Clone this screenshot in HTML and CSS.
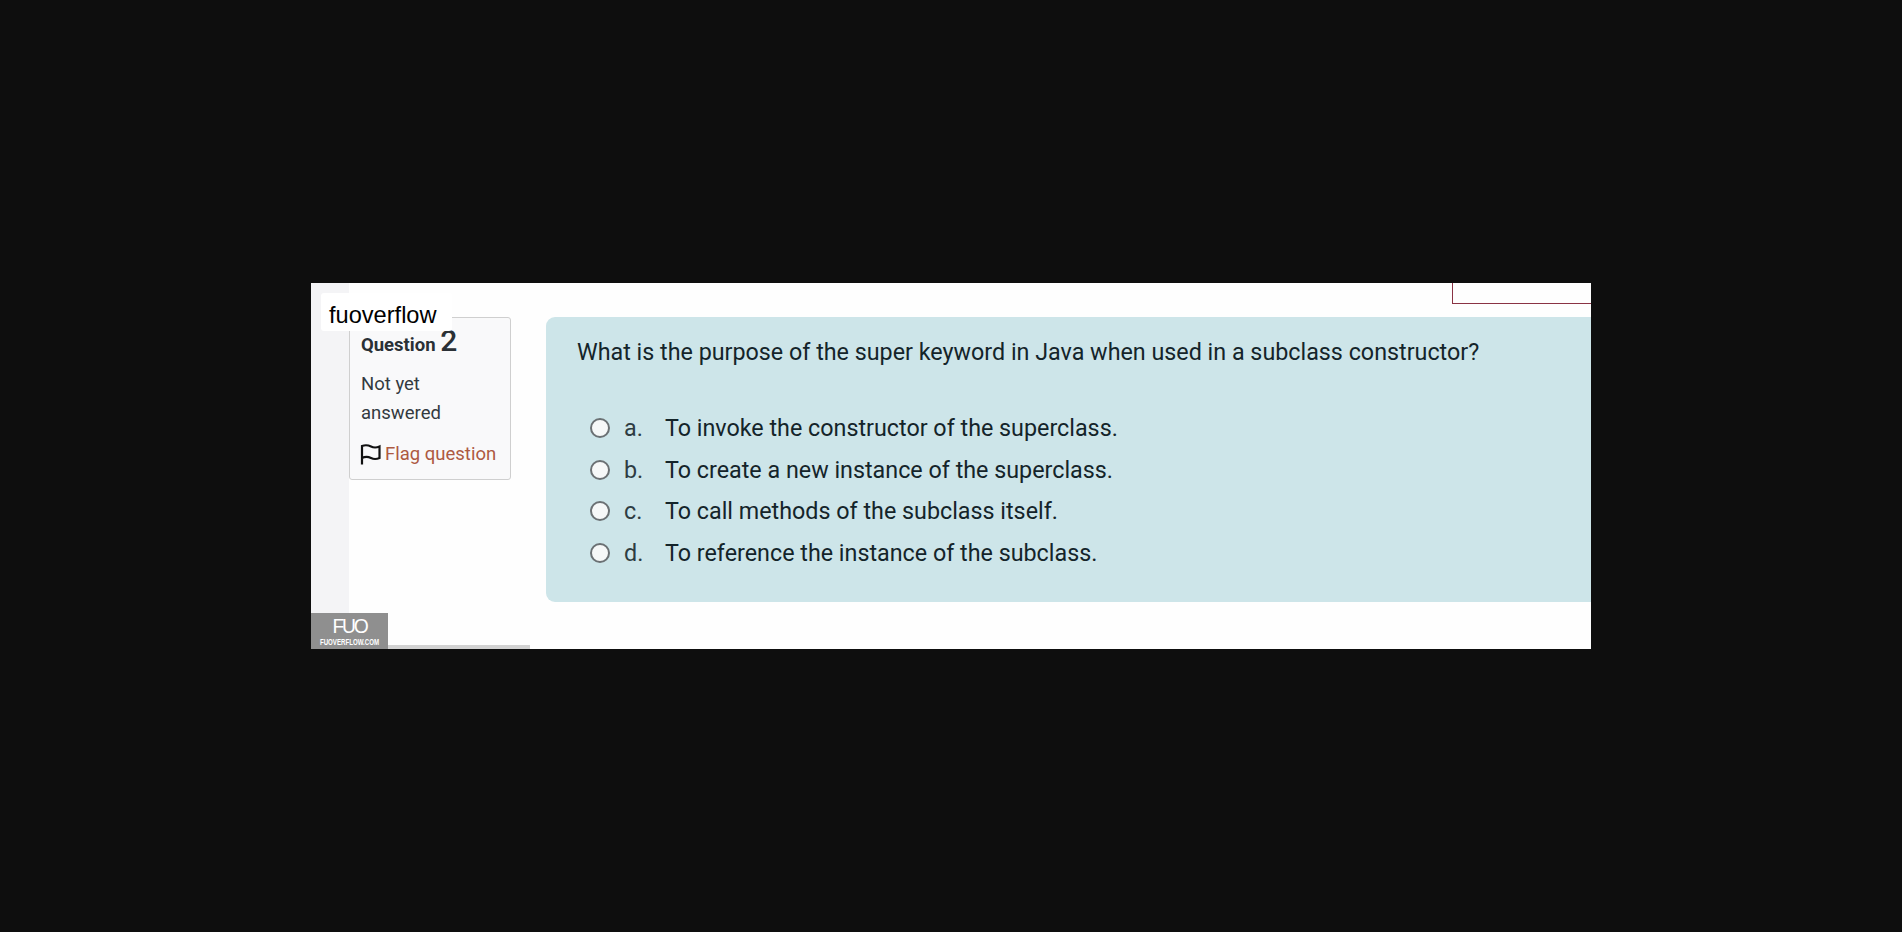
FILE: index.html
```html
<!DOCTYPE html>
<html lang="en">

<head>
    <meta charset="UTF-8">
    <title>Question 2 - fuoverflow</title>
    <link rel="stylesheet" href="styles.css">
</head>

<body>
    <div class="frame">
        <div class="strip"></div>

        <div class="content">
            <div class="top-row">
                <div class="timer-box"></div>
            </div>

            <div class="question-row">
                <div class="info-card">
                    <h3 class="question-no">Question <span class="number">2</span></h3>
                    <p class="state">Not yet answered</p>
                    <a class="flag" href="#">
                        <svg class="flag-icon" width="21" height="22" viewBox="0 0 21 22">
                            <path d="M2 21.500V3C6 1.500 8 2 11 3.500C14 5 16 5 19.500 3.500V15C16 16.500 14 16.500 11 15C8 13.500 6 13 2 15" fill="none" stroke="#111" stroke-width="2.200" />
                        </svg>
                        Flag question
                    </a>
                </div>

                <div class="question-box">
                    <p class="question-text">What is the purpose of the super keyword in Java when used in a subclass constructor?</p>
                    <div class="answers">
                        <label class="answer"><span class="radio"></span><span class="letter">a.</span>To invoke the constructor of the superclass.</label>
                        <label class="answer"><span class="radio"></span><span class="letter">b.</span>To create a new instance of the superclass.</label>
                        <label class="answer"><span class="radio"></span><span class="letter">c.</span>To call methods of the subclass itself.</label>
                        <label class="answer"><span class="radio"></span><span class="letter">d.</span>To reference the instance of the subclass.</label>
                    </div>
                </div>
            </div>
        </div>

        <!-- Marcas de agua encima del contenido -->
        <div class="brand">fuoverflow</div>
        <div class="logo">
            <span class="logo-big">FUO</span>
            <span class="logo-small">FUOVERFLOW.COM</span>
        </div>
        <div class="bottom-bar"></div>
    </div>
</body>

</html>
```

FILE: styles.css
```css
* {
    box-sizing: border-box;
}

body {
    margin: 0;
    height: 932px;
    background-color: #0e0e0e;
    display: flex;
    align-items: center;
    justify-content: center;
    font-family: Roboto, "Liberation Sans", sans-serif;
    overflow: hidden;
}

.frame {
    position: relative;
    width: 1280px;
    height: 366px;
    background-color: #fefefe;
    display: flex;
    overflow: hidden;
}

.strip {
    width: 38px;
    background-color: #f4f4f6;
}

.content {
    flex: 1;
    display: flex;
    flex-direction: column;
}

.top-row {
    height: 34px;
    display: flex;
    justify-content: flex-end;
}

.timer-box {
    width: 139px;
    height: 21px;
    border-left: 1px solid #8a3344;
    border-bottom: 1px solid #8a3344;
}

.question-row {
    display: flex;
    gap: 35px;
    align-items: flex-start;
}

.info-card {
    width: 162px;
    height: 163px;
    padding: 7px 8px 0 11px;
    background-color: #f9f9fa;
    border: 1px solid #cfcfcf;
    border-radius: 3px;
    color: #333a3f;
}

.question-no {
    margin: 0;
    font-size: 18.500px;
    font-weight: 700;
    line-height: 32px;
    color: #2a3035;
}

.number {
    font-size: 30px;
    font-weight: 500;
}

.state {
    width: 100px;
    margin: 9px 0 0;
    font-size: 18.500px;
    line-height: 28.500px;
}

.flag {
    display: flex;
    align-items: center;
    gap: 4px;
    margin-top: 16px;
    font-size: 18.500px;
    line-height: 22px;
    color: #ad5a42;
    text-decoration: none;
    white-space: nowrap;
}

.flag-icon {
    flex: none;
    margin-left: -1px;
}

.question-box {
    flex: 1;
    height: 285px;
    padding: 20px 0 0 31px;
    background-color: #cde5e9;
    border-radius: 9px 0 0 9px;
    color: #14242a;
    font-size: 23.300px;
    white-space: nowrap;
}

.question-text {
    margin: 0;
    line-height: 30px;
}

.answers {
    margin-top: 46px;
    display: flex;
    flex-direction: column;
    gap: 11.500px;
}

.answer {
    display: flex;
    align-items: center;
    height: 30px;
    padding-left: 13px;
}

.radio {
    width: 20px;
    height: 20px;
    margin-right: 14px;
    background-color: #f6f8f8;
    border: 2px solid #6b7174;
    border-radius: 50%;
}

.letter {
    width: 41px;
    color: #2e3c42;
}

.brand {
    position: absolute;
    left: 10px;
    top: 10px;
    height: 38px;
    padding: 6px 15px 0 8px;
    background-color: #fff;
    border-radius: 3px;
    font-family: "Liberation Sans", sans-serif;
    font-size: 23.600px;
    line-height: 32px;
    color: #000;
}

.logo {
    position: absolute;
    left: 0;
    bottom: 0;
    width: 77px;
    height: 36px;
    background-color: #8f8f8f;
    color: #fff;
    display: flex;
    flex-direction: column;
    align-items: center;
    font-family: "Liberation Sans", sans-serif;
}

.logo-big {
    font-size: 21px;
    line-height: 22px;
    margin-top: 2px;
    letter-spacing: -2.500px;
    transform: scaleX(0.92);
}

.logo-small {
    font-size: 9px;
    font-weight: 700;
    line-height: 10px;
    white-space: nowrap;
    transform: scaleX(0.68);
}

.bottom-bar {
    position: absolute;
    left: 77px;
    bottom: 0;
    width: 142px;
    height: 4px;
    background-color: #d2d2d2;
}
```
